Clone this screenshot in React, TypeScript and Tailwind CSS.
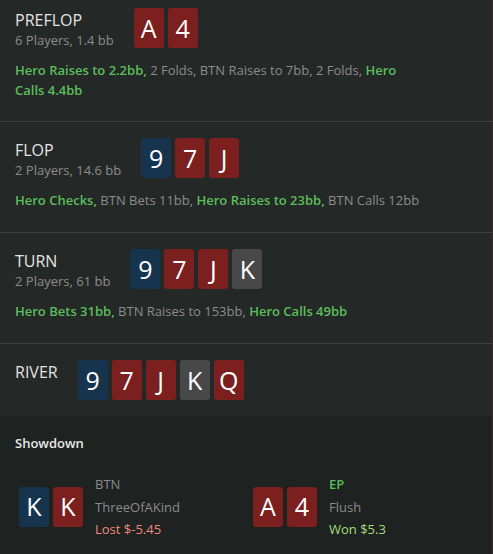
const font = { fontFamily: '"Segoe UI", "Open Sans", "Noto Sans", sans-serif' };

type Suit = "red" | "blue" | "gray";

const suitBg: Record<Suit, string> = {
  red: "bg-[#7b1f1f]",
  blue: "bg-[#17344f]",
  gray: "bg-[#484848]",
};

const Card = ({ rank, suit }: { rank: string; suit: Suit }) => (
  <div
    className={`${suitBg[suit]} w-[30px] h-[40px] rounded-[3px] flex items-center justify-center text-white text-[25px] leading-none`}
  >
    {rank}
  </div>
);

type Action = { text: string; hero?: boolean };

const Street = ({
  title,
  sub,
  cards,
  actions,
  first,
}: {
  title: string;
  sub?: string;
  cards: [string, Suit][];
  actions?: Action[];
  first?: boolean;
}) => (
  <div
    className={`px-[15px] border-b border-[#3b3e3d] ${first ? "pt-2 pb-[21px]" : "pt-4 pb-[22px]"}`}
  >
    <div className="flex items-start gap-5">
      <div>
        <div className="text-[16px] leading-6 text-[#e4e4e4]">{title}</div>
        {sub && <div className="text-[13px] leading-4 text-[#8c8c8c]">{sub}</div>}
      </div>
      <div className="flex gap-1">
        {cards.map(([r, s], i) => (
          <Card key={i} rank={r} suit={s} />
        ))}
      </div>
    </div>
    {actions && (
      <div className="mt-3 text-[13px] leading-5 text-[#8c8c8c] max-w-[405px]">
        {actions.map((a, i) => (
          <span key={i} className={a.hero ? "font-semibold text-[#5cbd5c]" : ""}>
            {a.text}
            {i < actions.length - 1 ? ", " : ""}
          </span>
        ))}
      </div>
    )}
  </div>
);

const Player = ({
  cards,
  pos,
  hand,
  result,
  won,
}: {
  cards: [string, Suit][];
  pos: string;
  hand: string;
  result: string;
  won?: boolean;
}) => (
  <div className="flex items-center gap-3">
    <div className="flex gap-1">
      {cards.map(([r, s], i) => (
        <Card key={i} rank={r} suit={s} />
      ))}
    </div>
    <div className="text-[13px] leading-[22.5px]">
      <div className={won ? "font-semibold text-[#5cbd5c]" : "text-[#8c8c8c]"}>{pos}</div>
      <div className="text-[#8c8c8c]">{hand}</div>
      <div className={won ? "text-[#a6dc7c]" : "text-[#f08a7c]"}>{result}</div>
    </div>
  </div>
);

export default function App() {
  return (
    <div style={font} className="w-[493px] h-[554px] bg-[#242827] border-r border-[#352c2a] overflow-hidden">
      <Street
        first
        title="PREFLOP"
        sub="6 Players, 1.4 bb"
        cards={[
          ["A", "red"],
          ["4", "red"],
        ]}
        actions={[
          { text: "Hero Raises to 2.2bb", hero: true },
          { text: "2 Folds" },
          { text: "BTN Raises to 7bb" },
          { text: "2 Folds" },
          { text: "Hero Calls 4.4bb", hero: true },
        ]}
      />
      <Street
        title="FLOP"
        sub="2 Players, 14.6 bb"
        cards={[
          ["9", "blue"],
          ["7", "red"],
          ["J", "red"],
        ]}
        actions={[
          { text: "Hero Checks", hero: true },
          { text: "BTN Bets 11bb" },
          { text: "Hero Raises to 23bb", hero: true },
          { text: "BTN Calls 12bb" },
        ]}
      />
      <Street
        title="TURN"
        sub="2 Players, 61 bb"
        cards={[
          ["9", "blue"],
          ["7", "red"],
          ["J", "red"],
          ["K", "gray"],
        ]}
        actions={[
          { text: "Hero Bets 31bb", hero: true },
          { text: "BTN Raises to 153bb" },
          { text: "Hero Calls 49bb", hero: true },
        ]}
      />
      <div className="px-[15px] pt-4 pb-4 flex items-start gap-5">
        <div className="text-[16px] leading-6 text-[#e4e4e4]">RIVER</div>
        <div className="flex gap-1">
          <Card rank="9" suit="blue" />
          <Card rank="7" suit="red" />
          <Card rank="J" suit="red" />
          <Card rank="K" suit="gray" />
          <Card rank="Q" suit="red" />
        </div>
      </div>
      <div className="bg-[#1e2220] h-full px-[15px] pt-[18px]">
        <div className="text-[13px] leading-[18px] font-semibold text-[#e8e8e8]">Showdown</div>
        <div className="flex mt-[21px]">
          <div className="w-[238px] pl-1">
            <Player
              cards={[
                ["K", "blue"],
                ["K", "red"],
              ]}
              pos="BTN"
              hand="ThreeOfAKind"
              result="Lost $-5.45"
            />
          </div>
          <div>
            <Player
              won
              cards={[
                ["A", "red"],
                ["4", "red"],
              ]}
              pos="EP"
              hand="Flush"
              result="Won $5.3"
            />
          </div>
        </div>
      </div>
    </div>
  );
}
